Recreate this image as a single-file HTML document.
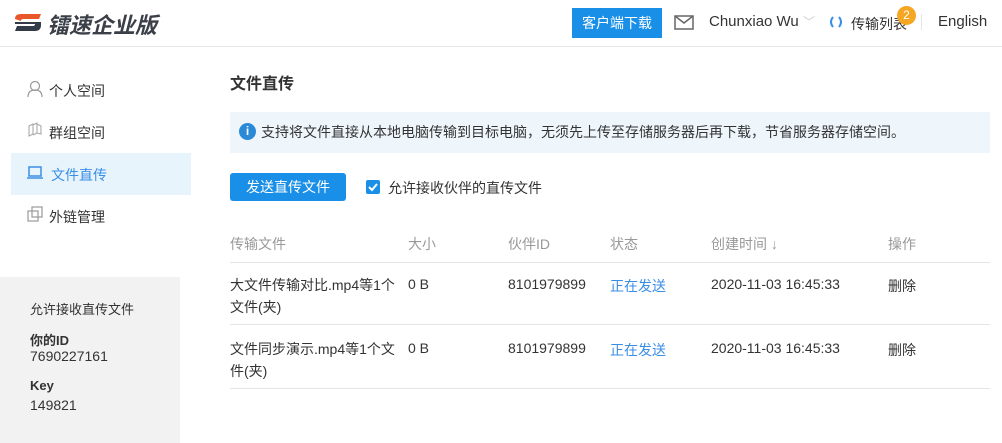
<!DOCTYPE html>
<html><head><meta charset="utf-8"><style>
*{margin:0;padding:0;box-sizing:border-box}
body{width:1002px;height:443px;background:#fff;font-family:"Liberation Sans","Noto Sans CJK SC",sans-serif;font-size:14px;color:#333;position:relative;overflow:hidden}
.abs{position:absolute;white-space:nowrap}
.hdr{position:absolute;left:0;top:0;width:1002px;height:47px;border-bottom:1px solid #e8e8e8}
.th{color:#999}
.line{position:absolute;left:230px;width:760px;height:1px;background:#e5e5e5}
.blue{color:#3a8ee6}
</style></head><body>
<div class="hdr"></div>
<svg class="abs" style="left:13px;top:11px" width="30" height="22" viewBox="0 0 30 22">
<path d="M2 8 Q2 3 8 3 L28 3 L26 8 L10 8 Q8 8 8 10Z" fill="#e8562a"/>
<path d="M2 11 L28 11 L28 14 Q28 20 22 20 L2 20 L4 15 L20 15 Q22 15 22 13 L2 13Z" fill="#333b48"/>
</svg>
<div class="abs" style="left:47px;top:8px;font-size:22px;font-weight:bold;font-style:italic;color:#3a3f48">镭速企业版</div>
<div class="abs" style="left:572px;top:8px;width:90px;height:30px;background:#1a8fe8;color:#fff;font-size:14px;line-height:30px;text-align:center">客户端下载</div>
<svg class="abs" style="left:674px;top:15px" width="20" height="15" viewBox="0 0 20 15"><rect x="1" y="1" width="18" height="13" fill="none" stroke="#666" stroke-width="1.5"/><path d="M1 1 L10 8 L19 1" fill="none" stroke="#666" stroke-width="1.5"/></svg>
<div class="abs" style="left:709px;top:13px;font-size:15px">Chunxiao Wu</div>
<div class="abs" style="left:803px;top:13px;color:#ccc;font-size:12px">﹀</div>
<svg class="abs" style="left:828px;top:15px" width="16" height="14"><path d="M5 2 Q1 7 5 12" fill="none" stroke="#3a8ee6" stroke-width="2"/><path d="M11 2 Q15 7 11 12" fill="none" stroke="#3a8ee6" stroke-width="2"/></svg>
<div class="abs" style="left:851px;top:14px">传输列表</div>
<div class="abs" style="left:897px;top:6px;width:19px;height:19px;border-radius:50%;background:#f5a623;color:#fff;font-size:12px;text-align:center;line-height:19px">2</div>
<div class="abs" style="left:921px;top:14px;width:1px;height:16px;background:#e5e5e5"></div>
<div class="abs" style="left:938px;top:13px;font-size:15px">English</div>
<svg class="abs" style="left:27px;top:80px" width="16" height="18"><circle cx="8" cy="6" r="4.5" fill="none" stroke="#999" stroke-width="1.2"/><path d="M1 17 Q1 10 8 10 Q15 10 15 17" fill="none" stroke="#999" stroke-width="1.2"/></svg>
<div class="abs" style="left:49px;top:81px">个人空间</div>
<svg class="abs" style="left:27px;top:122px" width="16" height="16"><path d="M2 4 L6 2 L6 12 L2 14Z M6 3 L10 1 L10 11 L6 13 M10 2 L14 4 L14 12 L10 11" fill="none" stroke="#aaa" stroke-width="1.1"/></svg>
<div class="abs" style="left:49px;top:123px">群组空间</div>
<div class="abs" style="left:11px;top:153px;width:180px;height:42px;background:#e8f4fc"></div>
<svg class="abs" style="left:26px;top:166px" width="18" height="14"><rect x="3" y="1" width="12" height="9" fill="none" stroke="#3a8ee6" stroke-width="1.5"/><path d="M1 12 L17 12" stroke="#3a8ee6" stroke-width="1.5"/></svg>
<div class="abs blue" style="left:51px;top:165px">文件直传</div>
<svg class="abs" style="left:27px;top:206px" width="16" height="16"><rect x="1" y="5" width="10" height="10" fill="none" stroke="#999" stroke-width="1.2"/><rect x="5" y="1" width="10" height="10" fill="none" stroke="#999" stroke-width="1.2"/></svg>
<div class="abs" style="left:49px;top:207px">外链管理</div>
<div class="abs" style="left:0;top:277px;width:180px;height:166px;background:#f2f2f2"></div>
<div class="abs" style="left:30px;top:299px;font-size:13px">允许接收直传文件</div>
<div class="abs" style="left:30px;top:330px;font-size:13px;font-weight:bold">你的ID</div>
<div class="abs" style="left:30px;top:348px">7690227161</div>
<div class="abs" style="left:30px;top:378px;font-size:13px;font-weight:bold">Key</div>
<div class="abs" style="left:30px;top:397px">149821</div>
<div class="abs" style="left:230px;top:70px;font-size:16px;font-weight:bold">文件直传</div>
<div class="abs" style="left:230px;top:112px;width:760px;height:41px;background:#eef6fc"></div>
<div class="abs" style="left:239px;top:123px;width:17px;height:17px;border-radius:50%;background:#2a8ad8;color:#fff;font-size:12px;font-weight:bold;text-align:center;line-height:17px">i</div>
<div class="abs" style="left:261px;top:122px;font-size:14px">支持将文件直接从本地电脑传输到目标电脑，无须先上传至存储服务器后再下载，节省服务器存储空间。</div>
<div class="abs" style="left:230px;top:173px;width:116px;height:28px;background:#1a8fe8;border-radius:3px;color:#fff;line-height:28px;text-align:center">发送直传文件</div>
<div class="abs" style="left:366px;top:180px;width:14px;height:14px;background:#1a8fe8;border-radius:2px"></div>
<svg class="abs" style="left:366px;top:180px" width="14" height="14"><path d="M3 7 L6 10 L11 4" fill="none" stroke="#fff" stroke-width="2"/></svg>
<div class="abs" style="left:388px;top:178px;font-size:14px">允许接收伙伴的直传文件</div>
<div class="abs th" style="left:230px;top:234px">传输文件</div>
<div class="abs th" style="left:408px;top:234px">大小</div>
<div class="abs th" style="left:508px;top:234px">伙伴ID</div>
<div class="abs th" style="left:610px;top:234px">状态</div>
<div class="abs th" style="left:711px;top:234px">创建时间 ↓</div>
<div class="abs th" style="left:888px;top:234px">操作</div>
<div class="line" style="top:262px"></div>
<div class="abs" style="left:230px;top:274px;line-height:22px">大文件传输对比.mp4等1个<br>文件(夹)</div>
<div class="abs" style="left:408px;top:276px">0 B</div>
<div class="abs" style="left:508px;top:276px">8101979899</div>
<div class="abs blue" style="left:610px;top:276px">正在发送</div>
<div class="abs" style="left:711px;top:276px">2020-11-03 16:45:33</div>
<div class="abs" style="left:888px;top:276px">删除</div>
<div class="line" style="top:324px"></div>
<div class="abs" style="left:230px;top:338px;line-height:22px">文件同步演示.mp4等1个文<br>件(夹)</div>
<div class="abs" style="left:408px;top:340px">0 B</div>
<div class="abs" style="left:508px;top:340px">8101979899</div>
<div class="abs blue" style="left:610px;top:340px">正在发送</div>
<div class="abs" style="left:711px;top:340px">2020-11-03 16:45:33</div>
<div class="abs" style="left:888px;top:340px">删除</div>
<div class="line" style="top:388px"></div>
</body></html>
